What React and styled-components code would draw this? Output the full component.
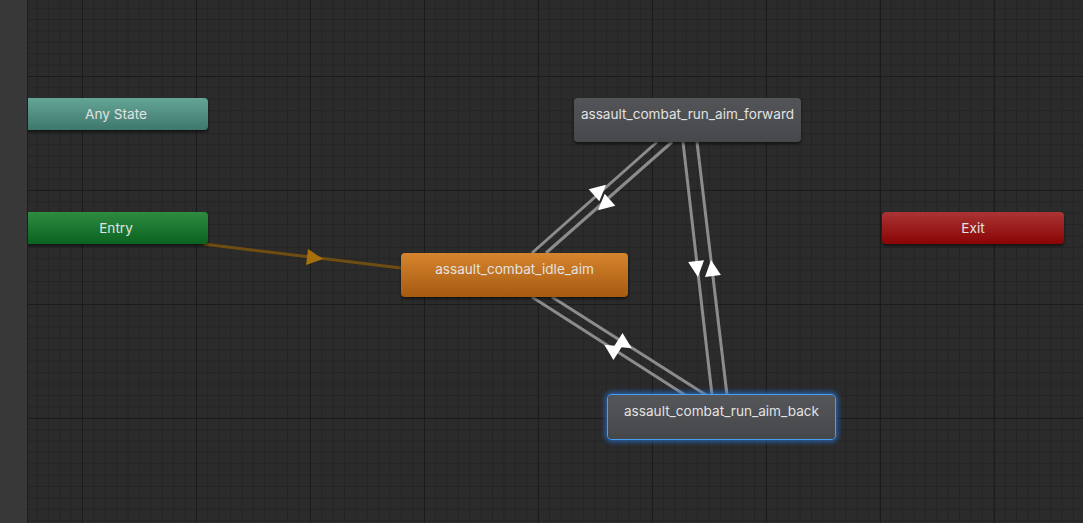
import React from "react";
import styled, { createGlobalStyle, css } from "styled-components";

const ORIGIN_X = 28;

const GlobalStyle = createGlobalStyle`
  html, body {
    margin: 0;
    padding: 0;
    background: #2a2a2a;
    overflow: hidden;
  }
  body {
    font-family: Inter, "Noto Sans", "Liberation Sans", sans-serif;
  }
`;

const variants = {
  any: css`
    background: linear-gradient(#64a596, #3e786c);
  `,
  entry: css`
    background: linear-gradient(#2e8b40, #0a6320);
  `,
  exit: css`
    background: linear-gradient(#aa3434, #8a0404);
  `,
  default: css`
    background: linear-gradient(#d6842c, #a65a12);
  `,
  state: css`
    background: linear-gradient(#535458, #47484c);
  `,
  selected: css`
    background: linear-gradient(#55565a, #46474b);
    box-shadow: 0 0 0 1px #4a9ff0, 0 0 5px 3px rgba(40, 120, 220, 0.7);
  `,
};

const states = [
  { id: "any", label: "Any State", x: 24, y: 98, w: 184, h: 32, variant: "any" },
  { id: "entry", label: "Entry", x: 24, y: 212, w: 184, h: 32, variant: "entry" },
  { id: "exit", label: "Exit", x: 882, y: 212, w: 182, h: 32, variant: "exit" },
  { id: "idle", label: "assault_combat_idle_aim", x: 401, y: 253, w: 227, h: 44, variant: "default" },
  { id: "fwd", label: "assault_combat_run_aim_forward", x: 574, y: 98, w: 227, h: 44, variant: "state" },
  { id: "back", label: "assault_combat_run_aim_back", x: 608, y: 395, w: 227, h: 44, variant: "selected" },
];

// transitions in page coords, arrow = [cx, cy]
const transitions = [
  { from: [203, 244], to: [401, 268], arrow: [315, 258], color: "#6f4d12", head: "#a8700c" },
  { from: [532, 253], to: [657, 142], arrow: [600, 190] },
  { from: [672, 142], to: [546, 253], arrow: [604, 205] },
  { from: [683, 142], to: [712, 395], arrow: [697, 269] },
  { from: [727, 395], to: [697, 142], arrow: [712, 268] },
  { from: [685, 395], to: [532, 297], arrow: [611, 349] },
  { from: [552, 297], to: [706, 395], arrow: [625, 344] },
];

function arrowPoints([cx, cy], from, to) {
  const dx = to[0] - from[0];
  const dy = to[1] - from[1];
  const len = Math.hypot(dx, dy);
  const ux = dx / len;
  const uy = dy / len;
  const px = -uy;
  const py = ux;
  const s = 8;
  const tip = [cx + ux * s, cy + uy * s];
  const a = [cx - ux * s + px * s, cy - uy * s + py * s];
  const b = [cx - ux * s - px * s, cy - uy * s - py * s];
  return [tip, a, b].map((p) => p.join(",")).join(" ");
}

export default function App() {
  return (
    <Window>
      <GlobalStyle />
      <Sidebar />
      <Canvas>
        <Links viewBox={`${ORIGIN_X} 0 1055 523`}>
          {transitions.map((t, i) => (
            <g key={i}>
              <line
                x1={t.from[0]}
                y1={t.from[1]}
                x2={t.to[0]}
                y2={t.to[1]}
                stroke={t.color || "#8c8c8c"}
                strokeWidth="3"
              />
              <polygon points={arrowPoints(t.arrow, t.from, t.to)} fill={t.head || "#ffffff"} />
            </g>
          ))}
        </Links>
        {states.map((s) => (
          <StateNode
            key={s.id}
            $x={s.x - ORIGIN_X}
            $y={s.y}
            $w={s.w}
            $h={s.h}
            $variant={s.variant}
          >
            {s.label}
          </StateNode>
        ))}
      </Canvas>
    </Window>
  );
}

const Window = styled.div`
  display: flex;
  width: 1083px;
  height: 523px;
  overflow: hidden;
`;

const Sidebar = styled.aside`
  width: 27px;
  flex: none;
  background: #383838;
  border-right: 1px solid #1e1e1e;
`;

const Canvas = styled.main`
  position: relative;
  flex: 1;
  overflow: hidden;
  background-color: #2b2b2b;
  background-image:
    linear-gradient(to right, #1b1b1b 1px, transparent 1px),
    linear-gradient(to bottom, #1b1b1b 1px, transparent 1px),
    linear-gradient(to right, #242424 1px, transparent 1px),
    linear-gradient(to bottom, #242424 1px, transparent 1px);
  background-size: 114px 114px, 114px 114px, 11.4px 11.4px, 11.4px 11.4px;
  background-position: 54px 76px, 54px 76px, 54px 76px, 54px 76px;
`;

const Links = styled.svg`
  position: absolute;
  left: 0;
  top: 0;
  width: 1055px;
  height: 523px;
`;

const StateNode = styled.div`
  position: absolute;
  left: ${({ $x }) => $x}px;
  top: ${({ $y }) => $y}px;
  width: ${({ $w }) => $w}px;
  height: ${({ $h }) => $h}px;
  box-sizing: border-box;
  border-radius: 4px;
  box-shadow: 0 2px 3px rgba(0, 0, 0, 0.55);
  color: #e2e2e2;
  font-size: 13.6px;
  line-height: 32px;
  text-align: center;
  white-space: nowrap;
  ${({ $variant }) => variants[$variant]}
`;
